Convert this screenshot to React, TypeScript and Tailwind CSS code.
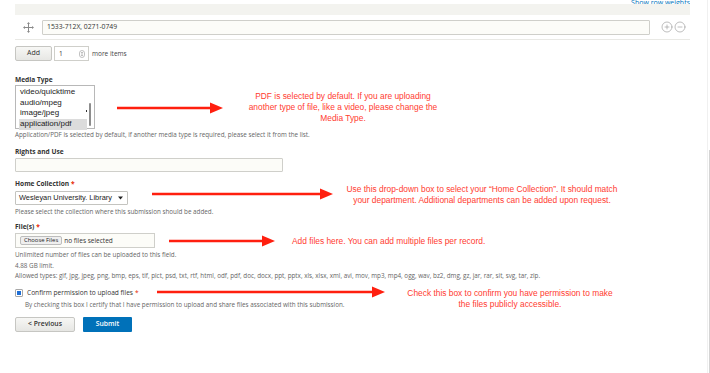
import { CirclePlus, CircleMinus } from "lucide-react";

const sans = "font-['Open_Sans',sans-serif]";
const arial = "font-['Liberation_Sans',Arial,sans-serif]";

function Arrow({ x1, x2, y }: { x1: number; x2: number; y: number }) {
  const w = x2 - x1;
  return (
    <svg
      className="absolute"
      style={{ left: x1, top: y - 6 }}
      width={w}
      height={12}
      viewBox={`0 0 ${w} 12`}
    >
      <line x1={0} y1={6} x2={w - 11} y2={6} stroke="#ff1f0f" strokeWidth={2.4} />
      <polygon points={`${w - 13},0.5 ${w},6 ${w - 13},11.5`} fill="#ff1f0f" />
    </svg>
  );
}

function DragHandle() {
  return (
    <svg width="11" height="11" viewBox="0 0 11 11" className="text-[#8a8a8a]">
      <path d="M5.5 1v9M1 5.5h9" stroke="currentColor" strokeWidth="1" />
      <path d="M5.5 0 7 2H4zM5.5 11 7 9H4zM0 5.5 2 4v3zM11 5.5 9 4v3z" fill="currentColor" />
    </svg>
  );
}

function Label({ children, required }: { children: React.ReactNode; required?: boolean }) {
  return (
    <div className={`${sans} text-[6.6px] leading-[8px] font-bold text-[#333]`}>
      {children}
      {required && <span className="text-[#e62600] ml-[2px]">*</span>}
    </div>
  );
}

function Help({ children, className = "" }: { children: React.ReactNode; className?: string }) {
  return (
    <div className={`${sans} text-[6.3px] leading-[8px] text-[#666] whitespace-nowrap ${className}`}>
      {children}
    </div>
  );
}

export default function App() {
  return (
    <div className="relative w-[710px] h-[373px] overflow-hidden bg-white flex">
      <div className="flex-1 pl-[15px] pr-[17px]">
        <div className="h-[4px] overflow-hidden flex justify-end items-end">
          <span className={`${sans} text-[7px] leading-[7px] text-[#0074bd] translate-y-[2px]`}>
            Show row weights
          </span>
        </div>
        <div className="h-[11px] bg-[#f3f3ef]" />
        <div className="h-[25px] border-b border-[#e9e9e5] flex items-center">
          <div className="w-[27px] flex justify-center">
            <DragHandle />
          </div>
          <div className={`w-[608px] h-[15px] border border-[#cfcfca] bg-[#fcfcf8] rounded-[1px] flex items-center pl-[4px] ${sans} text-[6.8px] text-[#333]`}>
            1533-712X, 0271-0749
          </div>
          <div className="flex ml-[11px] gap-[1px] text-[#9a9a9a]">
            <CirclePlus size={12} strokeWidth={1.3} />
            <CircleMinus size={12} strokeWidth={1.3} />
          </div>
        </div>

        <div className="mt-[6px] flex items-center h-[15px]">
          <div className={`w-[37px] h-[15px] border border-[#c6c6c2] bg-gradient-to-b from-[#f7f7f5] to-[#e7e7e4] rounded-[2px] flex items-center justify-center ${sans} text-[7px] text-[#333]`}>
            Add
          </div>
          <div className={`ml-[2px] w-[35px] h-[15px] border border-[#cfcfca] bg-white flex items-center justify-between pl-[4px] pr-[3px] ${sans} text-[6.5px] text-[#333]`}>
            1
            <svg width="6" height="8" viewBox="0 0 6 8">
              <rect x="0.5" y="0.5" width="5" height="7" rx="2.5" fill="none" stroke="#999" strokeWidth="0.6" />
              <path d="M1.8 3.3 3 2 4.2 3.3zM1.8 4.7 3 6 4.2 4.7z" fill="#777" />
            </svg>
          </div>
          <span className={`ml-[3px] ${sans} text-[6.5px] text-[#444]`}>more items</span>
        </div>

        <div className="mt-[15px]">
          <Label>Media Type</Label>
        </div>
        <div className={`relative mt-[1px] w-[80px] h-[44px] border border-[#b8b8b8] bg-white pt-[1px] pl-[4px] ${arial} text-[8px] leading-[10.7px] text-[#222]`}>
          <div>video/quicktime</div>
          <div>audio/mpeg</div>
          <div>image/jpeg</div>
          <div className="bg-[#dcdcdc] w-[68px] -ml-[1px] pl-[1px]">application/pdf</div>
          <div className="absolute right-[3px] top-[17px] w-[2px] h-[23px] rounded-full bg-[#8d8d8d]" />
          <div className="absolute right-[7px] top-[24px] w-[1.5px] h-[2px] bg-[#333]" />
        </div>
        <Help className="mt-[2px]">
          Application/PDF is selected by default, if another media type is required, please select it from the list.
        </Help>

        <div className="mt-[9px]">
          <Label>Rights and Use</Label>
        </div>
        <div className="mt-[2px] w-[268px] h-[14px] border border-[#cfcfca] bg-[#fcfcf8] rounded-[1px]" />

        <div className="mt-[8px]">
          <Label required>Home Collection</Label>
        </div>
        <div className={`mt-[3px] w-[113px] h-[14px] border border-[#c4c4c0] bg-white rounded-[1px] flex items-center justify-between pl-[3px] pr-[4px] ${arial} text-[7.4px] text-[#222]`}>
          Wesleyan University. Library
          <svg width="5" height="4" viewBox="0 0 5 4">
            <path d="M0 0.5h5L2.5 3.5z" fill="#222" />
          </svg>
        </div>
        <Help className="mt-[3px]">Please select the collection where this submission should be added.</Help>

        <div className="mt-[7px]">
          <Label required>File(s)</Label>
        </div>
        <div className="mt-[2px] w-[140px] h-[15px] border border-[#cfcfca] bg-[#fcfcf8] flex items-center pl-[4px] gap-[2px]">
          <div className={`h-[9px] px-[3px] border border-[#bdbdbd] bg-[#efefef] rounded-[2px] flex items-center ${sans} text-[5.9px] text-[#222]`}>
            Choose Files
          </div>
          <span className={`${sans} text-[6.5px] text-[#333]`}>no files selected</span>
        </div>
        <div className={`mt-[2px] ${sans} text-[6.3px] leading-[10.5px] text-[#666] whitespace-nowrap`}>
          <div>Unlimited number of files can be uploaded to this field.</div>
          <div>4.88 GB limit.</div>
          <div>
            Allowed types: gif, jpg, jpeg, png, bmp, eps, tif, pict, psd, txt, rtf, html, odf, pdf, doc, docx, ppt, pptx, xls, xlsx, xml, avi, mov, mp3, mp4, ogg, wav, bz2, dmg, gz, jar, rar, sit, svg, tar, zip.
          </div>
        </div>

        <div className="mt-[7px] h-[9px] flex items-center">
          <div className="w-[8px] h-[8px] border border-[#a8a8a8] bg-white rounded-[1px] flex items-center justify-center">
            <div className="w-[4px] h-[4px] bg-[#1f6fd6]" />
          </div>
          <span className={`ml-[4px] ${sans} text-[6.6px] text-[#333]`}>
            Confirm permission to upload files
            <span className="text-[#e62600] ml-[2px]">*</span>
          </span>
        </div>
        <Help className="mt-[3px] ml-[10px]">
          By checking this box I certify that I have permission to upload and share files associated with this submission.
        </Help>

        <div className="mt-[8px] flex gap-[8px]">
          <div className={`w-[60px] h-[15px] border border-[#c6c6c2] bg-gradient-to-b from-[#f7f7f5] to-[#e6e6e3] rounded-[2px] flex items-center justify-center ${sans} text-[6.8px] font-semibold text-[#333]`}>
            &lt; Previous
          </div>
          <div className={`w-[49px] h-[15px] bg-[#0071b9] rounded-[1px] flex items-center justify-center ${sans} text-[6.8px] font-semibold text-white`}>
            Submit
          </div>
        </div>
      </div>
      <div className="w-[3px] border-l border-[#f0f0f0] pt-[150px] flex justify-end">
        <div className="w-[1px] h-full bg-[#d4d4d4]" />
      </div>

      {/* annotations */}
      <Arrow x1={117} x2={223} y={108} />
      <div className={`absolute left-[223px] top-[91px] w-[240px] text-center whitespace-nowrap ${arial} text-[8.4px] leading-[10.8px] text-[#ff3b30]`}>
        PDF is selected by default. If you are uploading
        <br />
        another type of file, like a video, please change the
        <br />
        Media Type.
      </div>

      <Arrow x1={152} x2={333} y={194} />
      <div className={`absolute left-[332px] top-[184px] w-[300px] text-center whitespace-nowrap ${arial} text-[8.4px] leading-[10.5px] text-[#ff3b30]`}>
        Use this drop-down box to select your “Home Collection”. It should match
        <br />
        your department. Additional departments can be added upon request.
      </div>

      <Arrow x1={169} x2={275} y={241} />
      <div className={`absolute left-[292px] top-[236px] whitespace-nowrap ${arial} text-[8.4px] leading-[10.5px] text-[#ff3b30]`}>
        Add files here. You can add multiple files per record.
      </div>

      <Arrow x1={157} x2={385} y={292} />
      <div className={`absolute left-[390px] top-[288px] w-[240px] text-center whitespace-nowrap ${arial} text-[8.4px] leading-[10.5px] text-[#ff3b30]`}>
        Check this box to confirm you have permission to make
        <br />
        the files publicly accessible.
      </div>
    </div>
  );
}
